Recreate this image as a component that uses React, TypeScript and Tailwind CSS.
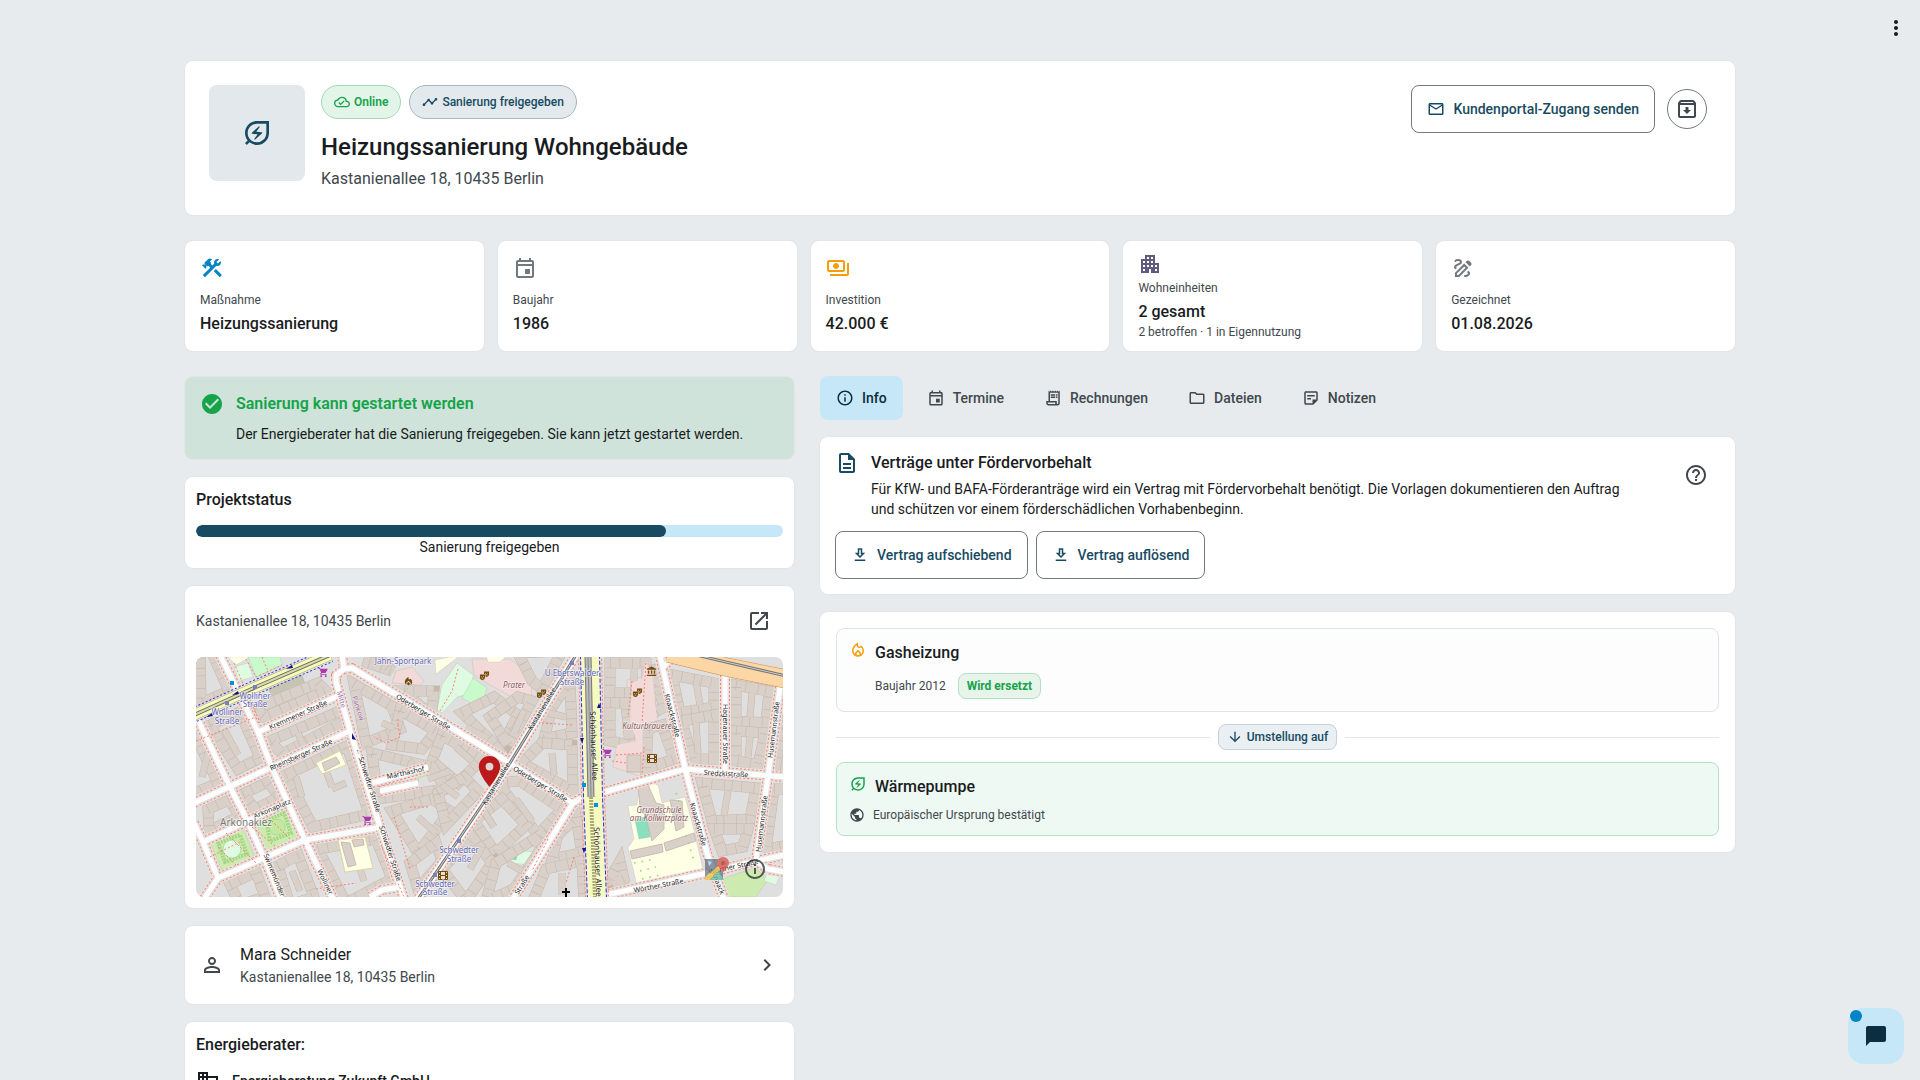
import type { ReactNode } from 'react';
import type { IconType } from 'react-icons';
import {
  MdAccountBalance,
  MdApartment,
  MdArrowDownward,
  MdCheckCircle,
  MdChatBubble,
  MdChevronRight,
  MdConstruction,
  MdDomain,
  MdHelpOutline,
  MdInfoOutline,
  MdLocalFireDepartment,
  MdMailOutline,
  MdMoreVert,
  MdOpenInNew,
  MdOutlineArchive,
  MdOutlineCloudDone,
  MdOutlineDescription,
  MdOutlineDownload,
  MdOutlineDraw,
  MdOutlineEnergySavingsLeaf,
  MdOutlineEvent,
  MdOutlineFolder,
  MdOutlineLocalFireDepartment,
  MdOutlinePayments,
  MdOutlineReceiptLong,
  MdOutlineStickyNote2,
  MdPersonOutline,
  MdPublic,
  MdShoppingCart,
  MdTheaterComedy,
  MdTimeline,
} from 'react-icons/md';

const ADDRESS = 'Kastanienallee 18, 10435 Berlin';

interface CardProps {
  children: ReactNode;
  className?: string;
}

const Card = ({ children, className = '' }: CardProps) => (
  <section className={`rounded-lg bg-white shadow-[0_0_2px_rgba(0,0,0,0.08)] ${className}`}>{children}</section>
);

interface OutlinedButtonProps {
  icon: IconType;
  label: string;
}

const OutlinedButton = ({ icon: Icon, label }: OutlinedButtonProps) => (
  <button
    type="button"
    className="flex h-12 items-center gap-2 rounded-lg border border-[#71787e] px-[15px] text-sm font-medium text-[#184b62]"
  >
    <Icon size={18} />
    {label}
  </button>
);

const Header = () => (
  <Card className="flex min-h-[154px] items-start gap-4 p-6">
    <div className="flex size-24 shrink-0 items-center justify-center rounded-lg bg-[#e3e8ec] text-[#184b62]">
      <MdOutlineEnergySavingsLeaf size={32} />
    </div>
    <div className="min-w-0 flex-1">
      <div className="flex gap-2 text-xs font-medium">
        <span className="flex h-[34px] items-center gap-1 rounded-full border border-[#a2dab7] bg-[#e3f4e9] px-3 font-semibold text-[#16a34a]">
          <MdOutlineCloudDone size={16} />
          Online
        </span>
        <span className="flex h-[34px] items-center gap-1 rounded-full border border-[#a3b7c1] bg-[#e3e9ed] px-3 text-[#184b62]">
          <MdTimeline size={16} />
          Sanierung freigegeben
        </span>
      </div>
      <h1 className="mt-3 text-2xl leading-8 font-medium text-[#191c1e]">Heizungssanierung Wohngebäude</h1>
      <p className="mt-1 text-base leading-6 text-[#41484d]">{ADDRESS}</p>
    </div>
    <div className="flex items-center gap-3 pr-1">
      <OutlinedButton icon={MdMailOutline} label="Kundenportal-Zugang senden" />
      <button
        type="button"
        aria-label="Archivieren"
        className="flex size-10 items-center justify-center rounded-full border border-[#71787e] text-[#41484d]"
      >
        <MdOutlineArchive size={24} />
      </button>
    </div>
  </Card>
);

interface Stat {
  icon: IconType;
  color: string;
  label: string;
  value: string;
  note?: string;
}

const STATS: Stat[] = [
  { icon: MdConstruction, color: 'text-[#0284c7]', label: 'Maßnahme', value: 'Heizungssanierung' },
  { icon: MdOutlineEvent, color: 'text-[#71787e]', label: 'Baujahr', value: '1986' },
  { icon: MdOutlinePayments, color: 'text-[#f59e0b]', label: 'Investition', value: '42.000 €' },
  {
    icon: MdApartment,
    color: 'text-[#605a7d]',
    label: 'Wohneinheiten',
    value: '2 gesamt',
    note: '2 betroffen · 1 in Eigennutzung',
  },
  { icon: MdOutlineDraw, color: 'text-[#71787e]', label: 'Gezeichnet', value: '01.08.2026' },
];

const StatCard = ({ icon: Icon, color, label, value, note }: Stat) => (
  <Card className="flex h-[110px] flex-col justify-center px-[15px]">
    <Icon size={24} className={color} />
    <span className={`text-xs leading-4 text-[#41484d] ${note ? 'mt-1' : 'mt-3'}`}>{label}</span>
    <span className="mt-1 text-base leading-6 font-medium text-[#191c1e]">{value}</span>
    {note && <span className="text-xs leading-4 text-[#41484d]">{note}</span>}
  </Card>
);

const StatusBanner = () => (
  <section className="flex h-[82px] gap-3 rounded-lg bg-[#cfe3da] px-[15px] pt-[15px] shadow-[0_0_2px_rgba(0,0,0,0.08)]">
    <MdCheckCircle size={24} className="shrink-0 text-[#16a34a]" />
    <div>
      <h2 className="text-base leading-6 font-semibold text-[#16a34a]">Sanierung kann gestartet werden</h2>
      <p className="mt-2 text-sm leading-5 text-[#191c1e]">
        Der Energieberater hat die Sanierung freigegeben. Sie kann jetzt gestartet werden.
      </p>
    </div>
  </section>
);

const ProjectStatus = ({ percent }: { percent: number }) => (
  <Card className="p-[11px]">
    <h2 id="project-status" className="text-base leading-6 font-medium text-[#191c1e]">
      Projektstatus
    </h2>
    <div
      role="progressbar"
      aria-labelledby="project-status"
      aria-valuenow={percent}
      className="mt-[13px] h-3 overflow-hidden rounded-full bg-[#c6e7f7]"
    >
      <div className="h-full rounded-full bg-[#184b62]" style={{ width: `${percent}%` }} />
    </div>
    <p className="text-center text-sm leading-5 text-[#191c1e]">Sanierung freigegeben</p>
  </Card>
);

// Centre lines of the perimeter buildings, one ring per city block.
const BLOCKS = [
  '4,-8 16,-4 33,34 5,46',
  '14,68 44,55 64,101 42,112',
  '-8,70 1,82 22,126 -8,139',
  '74,84 144,54 148,64 86,97',
  '58,52 122,26 130,34 68,60',
  '12,152 33,143 44,159 13,174',
  '47,137 72,125 84,140 59,152',
  '90,118 151,89 173,157 117,170',
  '34,227 60,215 69,240 44,248',
  '82,209 102,198 118,240 94,248',
  '122,192 180,182 196,222 150,246',
  '158,27 196,49 204,72 170,86',
  '204,53 240,74 226,92 196,88',
  '246,78 286,102 262,126 236,104',
  '176,96 236,110 250,132 182,142',
  '196,154 236,142 254,154 222,196',
  '242,136 268,120 282,134 250,168',
  '214,206 240,186 246,204 222,232',
  '176,-6 196,14 172,6',
  '208,34 238,34 236,52 228,52',
  '266,56 298,40 322,58 304,92',
  '294,60 322,40 336,44 312,88',
  '322,-4 366,-6 346,32 336,24',
  '356,50 374,24 376,76 348,82',
  '346,86 376,88 377,134 326,106',
  '302,126 324,124 366,152 342,178',
  '278,164 306,142 330,168 300,196',
  '246,212 276,180 296,206 270,244',
  '300,206 338,182 346,190 318,232 290,244',
  '380,160 386,196 356,202 362,178',
  '350,212 386,204 388,246 336,246',
  '414,6 450,6 452,36 414,36',
  '414,46 430,46 434,88 414,84',
  '452,72 466,68 478,102 450,112',
  '456,8 468,50 454,58',
  '476,18 518,26 518,50 484,56',
  '486,64 518,58 518,102 496,102',
  '540,28 573,34 570,66 540,64',
  '540,74 569,76 562,108 540,104',
  '588,50 594,110 580,108',
  '506,126 560,131 554,162 516,164',
  '518,172 552,172 547,190 526,194',
  '578,132 594,132 594,188 570,192',
  '414,222 424,204 428,222 416,228',
];

// Rear wings that reach into the courtyards.
const WINGS = [
  'M100 120l6 20M128 108l8 22M150 126l-14 6M186 66l12 5M216 104l-8 26M262 140l-16-12M284 148l14 22',
  'M222 160l18 16M318 76l10-22M352 56l18 4M356 96l2 22M320 142l16 22M346 176l14 12M366 216v22',
  'M438 12v20M500 24l4 24M500 66l2 30M556 36l-2 24M554 80l-2 20M532 134l-4 24M28 72l14 26',
  'M12 96l-6 24M102 76l6 14M96 214l8 20M160 200l8 24M270 70l22 12',
  'M260 90l16 14M232 122l22-8M286 190l-12 22M312 206l14 8M200 120l22 6',
];

const AREAS: [string, string][] = [
  ['#c6c5b3', '72,31 106,18 111,33 79,46'],
  ['#c6c5b3', '74,139 82,136 84,143 76,146'],
  ['#ffffe5', '32,0 54,0 40,8'],
  ['#dffce2', '38,10 52,6 57,20 43,24'],
  ['#c8facc', '52,0 84,0 86,8 60,20'],
  ['#c8facc', '-2,30 5,46 -2,50'],
  ['#cdebb0', '61,163 91,150 102,181 66,196'],
  ['#cdebb0', '14,186 47,171 59,201 26,213'],
  ['#f2dad9', '200,14 216,10 228,24 224,28 196,26'],
  ['#dffce2', '261,6 277,18 276,36 261,40 246,56 241,53 246,28'],
  ['#c8facc', '277,21 291,31 284,51 266,41'],
  ['#ffffe5', '239,3 254,0 262,0 240,17'],
  ['#f2dad9', '276,2 314,2 337,20 334,50 294,28 278,18'],
  ['#ffffe5', '290,-2 312,-2 304,5 292,5'],
  ['#f2dad9', '431,23 446,20 450,0 457,14 461,63 447,68 446,120 417,110 421,86 441,83 431,66'],
  ['#ffffe5', '142,183 169,180 177,211 149,215'],
  ['#cdebb0', '187,128 231,112 232,118 189,131'],
  ['#ffffe5', '432,149 441,148 442,140 456,126 462,128 466,146 489,140 498,173 507,213 441,228 432,191 438,182'],
  ['#88e0be', '439,163 451,159 454,180 443,182'],
  ['#88e0be', '452,155 461,152 462,160 453,162'],
  ['#dffce2', '316,193 339,195 339,208 311,206'],
  ['#88e0be', '316,196 322,195 320,203 314,202'],
  ['#cdebb0', '524,223 560,210 571,224 560,240 532,240'],
  ['#dffce2', '572,214 584,218 580,228 568,224'],
  ['#c8facc', '587,186 578,202 587,206'],
];

const SCHOOL_YARDS = ['120,106 144,94 150,108 126,117', '142,183 169,180 177,211 149,215'];

const SCHOOL_BUILDINGS = [
  '442,130 452,128 460,146 468,148 468,172 456,184 450,160 444,150',
  '474,143 486,144 488,170 480,174',
  '434,194 466,187 467,195 436,202',
  '468,186 498,176 500,184 470,194',
  '145,185 154,186 160,208 152,210',
  '156,183 167,182 168,188 158,190',
  '126,106 140,100 144,106 129,114',
];

const ROADS = [
  'M24 -2L62 75L76 111L109 183L137 242',
  'M-2 52L2 63L34 130L51 163L69 203L85 242',
  'M-2 166L7 185L22 221',
  'M62 75L144 38',
  'M-2 146L76 110L156 73',
  'M7 185L92 145',
  'M8 242L22 221L109 183L186 170',
  'M146 -2L148 12L140 18L140 25L156 80L167 116L184 170L204 230L208 242',
  'M148 12L156 11L304 100L377 146L317 242',
  'M176 126L202 119L232 110M184 134L222 126',
  'M174 240L186 233L204 230',
  'M377 146L384 142L489 112L589 120',
  'M464 -2L489 111L511 196L528 242',
  'M467 10L476 1',
  'M529 14V113',
  'M584 30L572 119L560 203',
  'M405 239L511 216L560 204L589 198',
  'M560 204L572 212L589 215',
];

const FOOTPATHS = [
  'M38 6L64 66M50 2L60 20L86 8M0 84L60 60M66 0L72 14',
  'M30 176L60 206M14 200L46 184M56 170L80 190M70 158L94 182M22 190L40 208',
  'M262 12L256 34L244 54M202 68L204 80L190 86L178 80M202 68V60',
  'M198 160L214 212M186 190L208 240M120 232L160 226M214 150L232 150',
  'M450 6L446 66M416 104L430 106M436 24L432 60M346 66L378 68M378 200L370 226',
  'M420 98L446 96M448 90L446 118M352 182L336 214',
];

type LabelKind = 'street' | 'avenue' | 'transit' | 'poi' | 'border' | 'district';

const LABEL_STYLE: Record<LabelKind, string> = {
  street: 'fill-[#222222] stroke-white/70 text-[7px]',
  avenue: 'fill-[#222222] stroke-white/30 text-[8px]',
  transit: 'fill-[#6266b3] stroke-white/70 text-[8px]',
  poi: 'fill-[#8b5a5e] stroke-white/60 text-[8px] italic',
  border: 'fill-[#9d6ea6] stroke-white/40 text-[7px]',
  district: 'fill-[#777777] stroke-white/70 text-[10px]',
};

const LABELS: [string, number, number, number, LabelKind][] = [
  ['Jahn-Sportpark', 207, 7, 0, 'transit'],
  ['Wolliner', 59, 42, 0, 'transit'],
  ['Straße', 59, 50, 0, 'transit'],
  ['Wolliner', 31, 58, 0, 'transit'],
  ['Straße', 31, 67, 0, 'transit'],
  ['Schwedter', 263, 196, 0, 'transit'],
  ['Straße', 263, 205, 0, 'transit'],
  ['Schwedter', 239, 230, 0, 'transit'],
  ['Straße', 239, 238, 0, 'transit'],
  ['U Eberswalder', 376, 19, 0, 'transit'],
  ['Straße', 376, 28, 0, 'transit'],
  ['Kremmener Straße', 103, 60, -24, 'street'],
  ['Rheinsberger Straße', 106, 100, -24, 'street'],
  ['← Schwedter Straße', 170, 124, 72, 'street'],
  ['Schwedter Straße', 192, 197, 72, 'street'],
  ['Oderberger Straße', 226, 57, 31, 'street'],
  ['Oderberger Straße', 343, 129, 31, 'street'],
  ['Marthashof', 210, 118, -12, 'street'],
  ['Arkonaplatz', 77, 154, -23, 'street'],
  ['Swinemünder', 76, 219, 68, 'street'],
  ['Wolliner', 127, 226, 64, 'street'],
  ['Kastanienallee', 348, 53, -59, 'street'],
  ['Kastanienallee', 302, 128, -59, 'street'],
  ['Straße', 328, 229, -58, 'street'],
  ['Schönhauser Allee', 395, 89, 88, 'avenue'],
  ['Schönhauser Allee', 399, 205, 88, 'avenue'],
  ['Knaackstraße', 474, 59, 76, 'street'],
  ['Knaackstraße', 500, 168, 74, 'street'],
  ['Knaack', 520, 227, 68, 'street'],
  ['Hagenauer Straße', 527, 77, 90, 'street'],
  ['Husemannstraße', 580, 73, -83, 'street'],
  ['Husemannstraße', 568, 167, -83, 'street'],
  ['Sredzkistraße', 530, 119, 3, 'street'],
  ['Wörther Straße', 463, 231, -11, 'street'],
  ['Wörther Straße', 538, 212, -12, 'street'],
  ['Mitte', 143, 43, 74, 'border'],
  ['Pankow', 160, 52, 72, 'border'],
  ['Prater', 318, 31, 0, 'poi'],
  ['Kulturbrauerei', 452, 72, 0, 'poi'],
  ['Grundschule', 463, 156, 0, 'poi'],
  ['am Kollwitzplatz', 463, 164, 0, 'poi'],
  ['Arkonakiez', 50, 169, 0, 'district'],
];

const STATIONS = [
  [59, 30],
  [31, 46],
  [263, 184],
  [239, 218],
  [376, 6],
];

const STOPS = [
  [36, 26],
  [388, 128],
  [400, 148],
];

const CINEMAS = [
  [456, 102],
  [247, 219],
];

const PLACES: [IconType, number, number, string][] = [
  [MdShoppingCart, 127, 15, '#ac39ac'],
  [MdShoppingCart, 171, 163, '#ac39ac'],
  [MdShoppingCart, 411, 96, '#ac39ac'],
  [MdTheaterComedy, 288, 18, '#734a08'],
  [MdTheaterComedy, 345, 36, '#734a08'],
  [MdTheaterComedy, 441, 35, '#734a08'],
  [MdAccountBalance, 455, 14, '#734a08'],
  [MdLocalFireDepartment, 212, 24, '#734a08'],
];

const KASTANIENALLEE = 'M380 -2L314 106L286 148L222 242';
const SCHOENHAUSER = 'M394 -2L397 140L401 242';
const BERNAUER = 'M-2 58L60 30L134 -2';

const CityMap = () => (
  <svg
    viewBox="0 0 587 240"
    preserveAspectRatio="xMidYMid slice"
    role="img"
    aria-label="Karte"
    className="block h-full w-full bg-[#e0dfdf] font-['Noto_Sans',sans-serif]"
  >
    {AREAS.map(([fill, points]) => (
      <polygon key={points} points={points} fill={fill} stroke="#000000" strokeOpacity={0.12} strokeWidth={0.6} />
    ))}
    <g fill="none" strokeLinejoin="miter">
      {BLOCKS.map((points) => (
        <g key={points}>
          <polygon points={points} stroke="#c6b7ab" strokeWidth={11} />
          <polygon points={points} stroke="#d9d0c9" strokeWidth={10} />
          <polygon points={points} stroke="#c6b7ab" strokeWidth={10} strokeDasharray="0.6 9 0.6 12 0.6 7" />
        </g>
      ))}
      {WINGS.map((d) => (
        <g key={d}>
          <path d={d} stroke="#c6b7ab" strokeWidth={7} />
          <path d={d} stroke="#d9d0c9" strokeWidth={6} />
        </g>
      ))}
    </g>
    {/* courtyard of the Kulturbrauerei stays open above the surrounding rings */}
    <polygon
      points="436,26 446,22 450,4 456,16 461,63 447,68 446,116 419,109 421,88 441,84 434,66"
      fill="#f2dad9"
    />
    <rect x={431} y={98} width={14} height={17} fill="#d9d0c9" stroke="#c3b3a6" strokeWidth={0.8} />
    {SCHOOL_YARDS.map((points) => (
      <polygon key={points} points={points} fill="#ffffe5" stroke="#d8d296" strokeWidth={0.8} />
    ))}
    {SCHOOL_BUILDINGS.map((points) => (
      <polygon key={points} points={points} fill="#d9d0c9" stroke="#c3b3a6" strokeWidth={0.8} />
    ))}
    <polygon points="70,163 88,156 95,176 74,184" fill="none" stroke="#a5d685" strokeWidth={4} strokeDasharray="2 1" />
    <polygon points="22,186 44,178 51,197 29,205" fill="none" stroke="#a5d685" strokeWidth={4} strokeDasharray="2 1" />
    <circle cx={36} cy={192} r={9} fill="#dffce2" stroke="#a3d9a5" strokeWidth={0.8} />
    <circle cx={81} cy={170} r={8} fill="#c5e8a0" stroke="#a3d98a" strokeWidth={0.8} />
    <path
      d="M438 206l22-4M444 214l16-4M446 222l18-4M480 136l8 24M490 178l8 26"
      fill="none"
      stroke="#9dd67e"
      strokeWidth={1.6}
      strokeDasharray="1.6 6"
    />

    <g fill="none" strokeLinejoin="round">
      {[...ROADS, KASTANIENALLEE].map((d) => (
        <g key={d}>
          <path d={d} stroke="#e6e2df" strokeWidth={12} />
          <path d={d} stroke="#fa8072" strokeWidth={10} strokeDasharray="2 2" />
          <path d={d} stroke="#e3e0dd" strokeWidth={8} />
        </g>
      ))}
      {ROADS.map((d) => (
        <path key={d} d={d} stroke="#ffffff" strokeWidth={5} />
      ))}
      {FOOTPATHS.map((d) => (
        <path key={d} d={d} stroke="#fa8072" strokeWidth={1} strokeDasharray="2 2" />
      ))}
      <path d={KASTANIENALLEE} stroke="#ffffff" strokeWidth={6} />
      <path d={KASTANIENALLEE} stroke="#777777" strokeWidth={3} />
      <path d={KASTANIENALLEE} stroke="#cccccc" strokeWidth={1} />

      <path d={BERNAUER} stroke="#2f2fd8" strokeWidth={15} strokeDasharray="2 2" />
      <path d={BERNAUER} stroke="#e3e0dd" strokeWidth={13} />
      <path d={BERNAUER} stroke="#a9ab74" strokeWidth={11} />
      <path d={BERNAUER} stroke="#f7fabf" strokeWidth={10} />
      <path d={BERNAUER} stroke="#6e6e56" strokeWidth={4} />
      <path d={BERNAUER} stroke="#d8dab0" strokeWidth={2} />

      <path d={SCHOENHAUSER} stroke="#fa8072" strokeWidth={24} strokeDasharray="2 2" />
      <path d={SCHOENHAUSER} stroke="#e3e0dd" strokeWidth={22} />
      <path d={SCHOENHAUSER} stroke="#2f2fd8" strokeWidth={20} strokeDasharray="4 2" />
      <path d={SCHOENHAUSER} stroke="#f7fabf" strokeWidth={18} />
      <path d="M392 -2L395 140" stroke="#777777" strokeWidth={7} />
      <path d="M392 -2L395 140" stroke="#bbbbbb" strokeWidth={5} />
      <path d="M392 -2L395 140" stroke="#888888" strokeWidth={1} />
      <path d="M395 140L399 242" stroke="#a9ab74" strokeWidth={4} strokeDasharray="2 1" />

      <path d="M472 -4L530 10L590 22" stroke="#c98d4b" strokeWidth={19} />
      <path d="M472 -4L530 10L590 22" stroke="#fcd6a4" strokeWidth={18} />
      <path d="M500 -2L590 19" stroke="#777777" strokeWidth={3} />
      <path d="M500 -2L590 19" stroke="#cccccc" strokeWidth={1} />
    </g>

    <path
      d="M36 38l6-4 1 3zM90 12l6-4 1 3zM156 76l4 7-4-1zM403 46l-2 5h4zM386 86l-2-5h4zM388 196l-2-5h4zM10 60l6-4 1 3z"
      fill="#11118c"
    />
    <path d="M369 231h2v3h3v2h-3v6h-2v-6h-3v-2h3z" fill="#000000" />
    {STATIONS.map(([x, y]) => (
      <rect key={`${x}-${y}`} x={x - 2} y={y - 2} width={4} height={4} fill="#7a80bd" />
    ))}
    {STOPS.map(([x, y]) => (
      <rect key={`${x}-${y}`} x={x - 2} y={y - 2} width={4} height={4} fill="#0092da" />
    ))}
    {CINEMAS.map(([x, y]) => (
      <g key={`${x}-${y}`} transform={`translate(${x - 5} ${y - 5})`}>
        <rect width={10} height={9} rx={1} fill="#734a08" />
        <path d="M3 1h4v3H3zM3 5h4v3H3zM1 1h1v1H1zM1 4h1v1H1zM1 7h1v1H1zM8 1h1v1H8zM8 4h1v1H8zM8 7h1v1H8z" fill="#e8dfd8" />
      </g>
    ))}
    {PLACES.map(([Icon, x, y, color]) => (
      <Icon key={`${x}-${y}`} x={x - 5} y={y - 5} size={11} color={color} />
    ))}
    <g textAnchor="middle" strokeWidth={1.4} strokeLinejoin="round" className="[paint-order:stroke]">
      {LABELS.map(([text, x, y, angle, kind]) => (
        <text key={`${text}-${x}-${y}`} transform={`translate(${x} ${y}) rotate(${angle})`} className={LABEL_STYLE[kind]}>
          {text}
        </text>
      ))}
    </g>

    <g opacity={0.7}>
      <rect x={509} y={202} width={18} height={21} fill="#5b6b7c" />
      <path d="M509 220l18-15v5l-13 13h-5z" fill="#f0c239" />
      <path d="M514 223l8-9 6 9z" fill="#58b89b" />
      <path d="M512 204l4 1-3 4z" fill="#8fd0ff" />
      <path d="M527 200a6 6 0 0 1 6 6c0 4-6 9-6 9s-6-5-6-9a6 6 0 0 1 6-6z" fill="#d9463c" />
      <circle cx={527} cy={206} r={2} fill="#8f2c28" />
    </g>

    <path
      fill="#ba1a1a"
      d="M293.500 99c-5.900 0-10.700 4.800-10.700 10.600 0 8 10.700 20.400 10.700 20.400s10.700-12.400 10.700-20.400c0-5.800-4.800-10.600-10.700-10.600z"
    />
    <circle cx={293.5} cy={109.6} r={3.9} fill="#e0d6d2" />
  </svg>
);

const MapCard = () => (
  <Card className="p-[11px]">
    <div className="flex h-12 items-center justify-between">
      <span className="text-sm leading-5 text-[#41484d]">{ADDRESS}</span>
      <button type="button" aria-label="In Karten öffnen" className="flex size-12 items-center justify-center text-[#41484d]">
        <MdOpenInNew size={24} />
      </button>
    </div>
    <div className="relative mt-3 h-[240px] overflow-hidden rounded-lg">
      <CityMap />
      <button
        type="button"
        aria-label="Kartenquellen"
        className="absolute right-4 bottom-4 flex size-6 items-center justify-center text-[#191c1e]/70"
      >
        <MdInfoOutline size={24} />
      </button>
    </div>
  </Card>
);

const CustomerCard = () => (
  <Card>
    <button type="button" className="flex h-[78px] w-full items-center gap-4 px-[15px] text-left text-[#41484d]">
      <MdPersonOutline size={24} />
      <span className="flex-1">
        <span className="block text-base leading-6 text-[#191c1e]">Mara Schneider</span>
        <span className="block text-sm leading-5">{ADDRESS}</span>
      </span>
      <MdChevronRight size={24} />
    </button>
  </Card>
);

const ConsultantCard = () => (
  <Card className="px-[11px] pt-[11px] pb-4">
    <h2 className="text-base leading-6 font-medium text-[#191c1e]">Energieberater:</h2>
    <div className="mt-3 flex items-center gap-3 text-[#191c1e]">
      <MdDomain size={24} />
      <span className="text-sm leading-5 font-medium">Energieberatung Zukunft GmbH</span>
    </div>
  </Card>
);

const TABS: { label: string; icon: IconType }[] = [
  { label: 'Info', icon: MdInfoOutline },
  { label: 'Termine', icon: MdOutlineEvent },
  { label: 'Rechnungen', icon: MdOutlineReceiptLong },
  { label: 'Dateien', icon: MdOutlineFolder },
  { label: 'Notizen', icon: MdOutlineStickyNote2 },
];

const Tabs = ({ active }: { active: string }) => (
  <div role="tablist" className="flex gap-2">
    {TABS.map(({ label, icon: Icon }) => (
      <button
        key={label}
        type="button"
        role="tab"
        aria-selected={label === active}
        className={`flex h-11 items-center gap-2 rounded-lg px-4 text-sm font-medium ${
          label === active ? 'bg-[#c6e7f7] text-[#0b2e40]' : 'text-[#41484d]'
        }`}
      >
        <Icon size={18} />
        {label}
      </button>
    ))}
  </div>
);

const ContractsCard = () => (
  <Card className="px-[15px] pt-3.5 pb-[15px]">
    <div className="flex gap-3">
      <MdOutlineDescription size={24} className="shrink-0 text-[#184b62]" />
      <div className="flex-1">
        <h2 className="text-base leading-6 font-medium text-[#191c1e]">Verträge unter Fördervorbehalt</h2>
        <p className="mt-1 max-w-[768px] text-sm leading-5 text-[#191c1e]">
          Für KfW- und BAFA-Förderanträge wird ein Vertrag mit Fördervorbehalt benötigt. Die Vorlagen dokumentieren den
          Auftrag und schützen vor einem förderschädlichen Vorhabenbeginn.
        </p>
      </div>
      <button type="button" aria-label="Hilfe" className="flex size-12 items-center justify-center text-[#41484d]">
        <MdHelpOutline size={24} />
      </button>
    </div>
    <div className="mt-3 flex gap-2">
      <OutlinedButton icon={MdOutlineDownload} label="Vertrag aufschiebend" />
      <OutlinedButton icon={MdOutlineDownload} label="Vertrag auflösend" />
    </div>
  </Card>
);

const HeatingCard = () => (
  <Card className="p-4">
    <div className="flex gap-2 rounded-lg border border-[#dfe4e8] bg-[#fdfdfd] p-3">
      <MdOutlineLocalFireDepartment size={18} className="shrink-0 text-[#f59e0b]" />
      <div>
        <h3 className="text-base leading-6 font-medium text-[#191c1e]">Gasheizung</h3>
        <div className="mt-2 flex items-center gap-3 text-xs text-[#41484d]">
          Baujahr 2012
          <span className="flex h-[26px] items-center rounded-lg border border-[#b5e0c4] bg-[#e6f4ea] px-2 font-bold text-[#16a34a]">
            Wird ersetzt
          </span>
        </div>
      </div>
    </div>
    <div className="my-3 flex items-center gap-2">
      <span className="h-px flex-1 bg-[#e3e7ea]" />
      <span className="flex h-[26px] items-center gap-1 rounded-lg border border-[#c6d1d8] bg-[#e9eff2] px-2 text-xs font-medium text-[#184b62]">
        <MdArrowDownward size={16} />
        Umstellung auf
      </span>
      <span className="h-px flex-1 bg-[#e3e7ea]" />
    </div>
    <div className="rounded-lg border border-[#b5e0c4] bg-[#eff9f3] p-3">
      <div className="flex gap-2">
        <MdOutlineEnergySavingsLeaf size={18} className="shrink-0 text-[#16a34a]" />
        <h3 className="text-base leading-6 font-medium text-[#191c1e]">Wärmepumpe</h3>
      </div>
      <div className="mt-2 flex items-center gap-2 text-xs leading-4 text-[#41484d]">
        <MdPublic size={16} />
        Europäischer Ursprung bestätigt
      </div>
    </div>
  </Card>
);

const App = () => (
  <div className="relative h-screen overflow-hidden bg-[#e7ebee] font-['Roboto',sans-serif]">
    <header className="flex h-[61px] items-start justify-end pt-2 pr-1">
      <button type="button" aria-label="Mehr" className="flex size-10 items-center justify-center text-[#191c1e]">
        <MdMoreVert size={24} />
      </button>
    </header>
    <main className="mx-auto max-w-[1550px]">
      <Header />
      <div className="mt-[26px] grid grid-cols-5 gap-3.5">
        {STATS.map((stat) => (
          <StatCard key={stat.label} {...stat} />
        ))}
      </div>
      <div className="mt-[25px] grid grid-cols-[609fr_915fr] items-start gap-[26px]">
        <div className="flex min-w-0 flex-col gap-[18px] pt-px">
          <StatusBanner />
          <ProjectStatus percent={80} />
          <MapCard />
          <CustomerCard />
          <ConsultantCard />
        </div>
        <div className="min-w-0">
          <Tabs active="Info" />
          <div className="mt-[17px] flex flex-col gap-[18px]">
            <ContractsCard />
            <HeatingCard />
          </div>
        </div>
      </div>
    </main>
    <button
      type="button"
      aria-label="Chat öffnen"
      className="absolute right-4 bottom-4 flex size-14 items-center justify-center rounded-2xl bg-[#c6e7f7] text-[#0b2e40]"
    >
      <MdChatBubble size={24} />
      <span className="absolute top-0.5 left-0.5 size-3 rounded-full bg-[#0284c7]" />
    </button>
  </div>
);

export default App;
